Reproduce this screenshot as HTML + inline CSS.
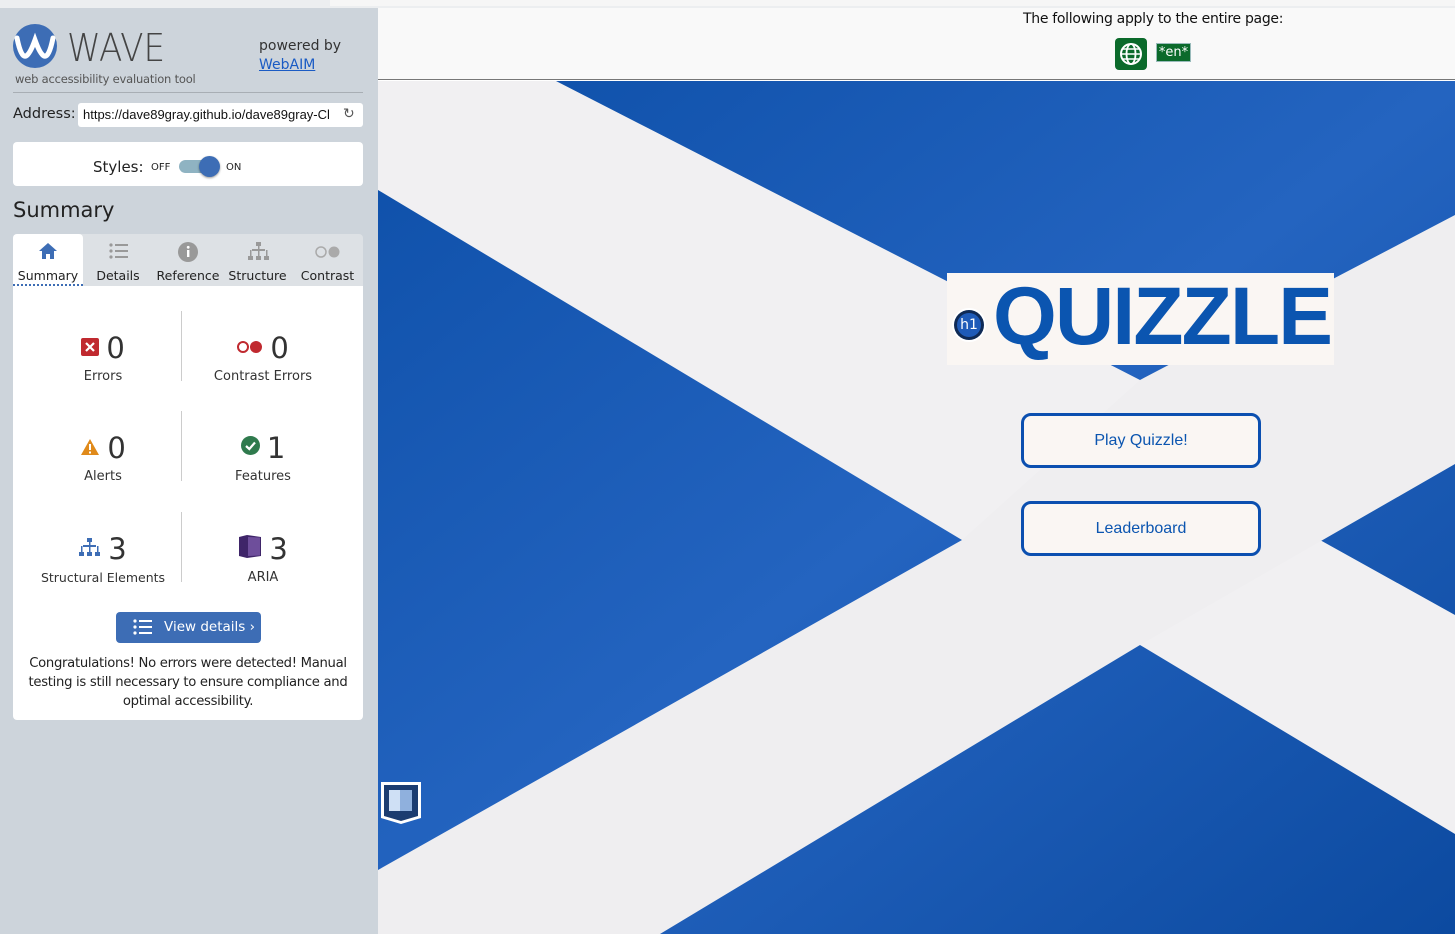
<!DOCTYPE html>
<html><head><meta charset="utf-8"><style>
*{margin:0;padding:0;box-sizing:border-box}
body{width:1455px;height:934px;overflow:hidden;position:relative;font-family:"DejaVu Sans","Liberation Sans",sans-serif;background:#fff}
.abs{position:absolute}
#side{left:0;top:8px;width:378px;height:926px;background:#cdd4db}
.card{background:#fff;border-radius:4px}
.stat{position:absolute;width:160px;text-align:center;font-size:13px;color:#333;line-height:22px}
.num{font-size:29px;font-weight:normal;color:#333;font-family:"DejaVu Sans",sans-serif;line-height:36px;margin-left:3px}
.tab{position:absolute;top:268px;font-size:12.5px;color:#222;text-align:center}
.btn{position:absolute;left:1021px;width:240px;height:55px;border:3px solid #0b4fb0;border-radius:10px;background:#faf6f3;color:#0b55b0;font-family:"Liberation Sans",sans-serif;font-size:16px;text-align:center;line-height:49px}
</style></head><body>
<div class="abs" style="left:0;top:0;width:1455px;height:8px;background:#eceef0"></div>
<div class="abs" style="left:330px;top:0;width:1125px;height:6px;background:#f6f6f6"></div>
<div id="side" class="abs"></div>
<svg class="abs" style="left:13px;top:24px" width="44" height="44" viewBox="0 0 44 44"><circle cx="22" cy="22" r="22" fill="#3d6db5"/><path d="M4 14 Q8 34 13 32 Q17 30 22 16 Q27 30 31 32 Q36 34 40 14" fill="none" stroke="#fff" stroke-width="5" stroke-linecap="round"/></svg>
<div class="abs" style="left:67px;top:26px;font-size:38px;font-weight:200;color:#444;letter-spacing:0;font-family:'DejaVu Sans',sans-serif;transform:scaleX(0.9);transform-origin:left">WAVE</div>
<div class="abs" style="left:15px;top:72px;font-size:11.5px;color:#555;letter-spacing:-0.2px">web accessibility evaluation tool</div>
<div class="abs" style="left:259px;top:38px;font-size:14px;color:#333">powered by</div>
<div class="abs" style="left:259px;top:57px;font-size:14px;color:#1a5bc4;text-decoration:underline">WebAIM</div>
<div class="abs" style="left:13px;top:92px;width:350px;height:1px;background:#a8aeb4"></div>
<div class="abs" style="left:13px;top:106px;font-size:14.5px;color:#222">Address:</div>
<div class="abs card" style="left:78px;top:103px;width:285px;height:24px;border-radius:3px;font-family:'Liberation Sans',sans-serif;font-size:13px;line-height:24px;padding-left:5px;color:#111;overflow:hidden;white-space:nowrap">https://dave89gray.github.io/dave89gray-Cl</div>
<div class="abs" style="left:340px;top:106px;font-size:14px;color:#555;background:#fff;padding:0 3px">↻</div>
<div class="abs card" style="left:13px;top:142px;width:350px;height:44px"></div>
<div class="abs" style="left:93px;top:158px;font-size:15px;color:#222">Styles:</div>
<div class="abs" style="left:151px;top:162px;font-size:10px;color:#222">OFF</div>
<div class="abs" style="left:179px;top:160px;width:36px;height:13px;border-radius:7px;background:#8fb3c2"></div>
<div class="abs" style="left:199px;top:156px;width:21px;height:21px;border-radius:50%;background:#3d6db5;box-shadow:0 1px 2px rgba(0,0,0,.4)"></div>
<div class="abs" style="left:226px;top:162px;font-size:10px;color:#222">ON</div>
<div class="abs" style="left:13px;top:198px;font-size:21px;color:#222">Summary</div>
<div class="abs" style="left:13px;top:234px;width:350px;height:52px;background:#dde1e5;border-radius:4px 4px 0 0"></div>
<div class="abs" style="left:13px;top:234px;width:70px;height:52px;background:#fff;border-radius:4px 4px 0 0;border-bottom:2px dotted #3d6db5"></div>
<svg class="abs" style="left:38px;top:242px" width="20" height="18" viewBox="0 0 20 18"><path d="M10 1 L19 9 H16 V17 H12 V12 H8 V17 H4 V9 H1Z" fill="#3d6db5"/></svg>
<svg class="abs" style="left:109px;top:243px" width="20" height="16" viewBox="0 0 20 16" fill="#999"><circle cx="2" cy="2" r="1.6"/><rect x="6" y="1" width="13" height="2"/><circle cx="2" cy="8" r="1.6"/><rect x="6" y="7" width="13" height="2"/><circle cx="2" cy="14" r="1.6"/><rect x="6" y="13" width="13" height="2"/></svg>
<svg class="abs" style="left:178px;top:242px" width="20" height="20"><circle cx="10" cy="10" r="10" fill="#999"/><rect x="9" y="8" width="2.4" height="7" fill="#fff"/><circle cx="10.2" cy="5.3" r="1.4" fill="#fff"/></svg>
<svg class="abs" style="left:248px;top:242px" width="22" height="20" fill="#999"><rect x="8" y="0" width="5" height="4"/><rect x="4" y="7" width="13" height="2"/><rect x="0" y="14" width="5" height="4"/><rect x="8" y="14" width="5" height="4"/><rect x="16" y="14" width="5" height="4"/><rect x="10" y="4" width="1.5" height="10"/><rect x="2" y="8" width="1.5" height="6"/><rect x="18" y="8" width="1.5" height="6"/></svg>
<svg class="abs" style="left:315px;top:245px" width="28" height="14"><circle cx="6" cy="7" r="5" fill="none" stroke="#aaa" stroke-width="1.5"/><circle cx="19" cy="7" r="5.5" fill="#aaa"/></svg>
<div class="tab" style="left:13px;width:70px">Summary</div>
<div class="tab" style="left:88px;width:60px">Details</div>
<div class="tab" style="left:153px;width:70px">Reference</div>
<div class="tab" style="left:225px;width:65px">Structure</div>
<div class="tab" style="left:295px;width:65px">Contrast</div>
<div class="abs card" style="left:13px;top:286px;width:350px;height:434px;border-radius:0 0 4px 4px"></div>
<div class="abs" style="left:181px;top:311px;width:1px;height:70px;background:#ccc"></div>
<div class="abs" style="left:181px;top:411px;width:1px;height:70px;background:#ccc"></div>
<div class="abs" style="left:181px;top:512px;width:1px;height:70px;background:#ccc"></div>
<div class="stat" style="left:23px;top:330px"><svg width="18" height="18" style="vertical-align:2px"><rect width="18" height="18" rx="2" fill="#c0292f"/><path d="M5 5L13 13M13 5L5 13" stroke="#fff" stroke-width="2.2"/></svg> <span class="num">0</span><br>Errors</div>
<div class="stat" style="left:183px;top:330px"><svg width="26" height="14" style="vertical-align:4px"><circle cx="6" cy="7" r="5" fill="none" stroke="#c0292f" stroke-width="2"/><circle cx="19" cy="7" r="6" fill="#c0292f"/></svg> <span class="num">0</span><br>Contrast Errors</div>
<div class="stat" style="left:23px;top:430px"><svg width="20" height="18" style="vertical-align:2px"><path d="M10 1L19 17H1Z" fill="#e08a1a"/><rect x="9" y="6" width="2" height="6" fill="#fff"/><rect x="9" y="13.5" width="2" height="2" fill="#fff"/></svg> <span class="num">0</span><br>Alerts</div>
<div class="stat" style="left:183px;top:430px"><svg width="19" height="19" style="vertical-align:3px"><circle cx="9.5" cy="9.5" r="9.5" fill="#2f7a4d"/><path d="M5 10L8.3 13L14 6.5" stroke="#fff" stroke-width="2.2" fill="none"/></svg> <span class="num">1</span><br>Features</div>
<div class="stat" style="left:18px;top:531px;width:170px;font-size:12.5px"><svg width="22" height="19" fill="#3d6db5" style="vertical-align:2px"><rect x="8" y="0" width="5" height="4"/><rect x="4" y="7" width="13" height="2"/><rect x="0" y="14" width="5" height="4"/><rect x="8" y="14" width="5" height="4"/><rect x="16" y="14" width="5" height="4"/><rect x="10" y="4" width="1.5" height="10"/><rect x="2" y="8" width="1.5" height="6"/><rect x="18" y="8" width="1.5" height="6"/></svg> <span class="num">3</span><br>Structural Elements</div>
<div class="stat" style="left:183px;top:531px"><svg width="24" height="24" style="vertical-align:0"><path d="M1 2L9 0L23 2V21L9 23L1 21Z" fill="#3f2569"/><path d="M10 2L22 2.5V20.5L10 21Z" fill="#6e4e9b"/></svg> <span class="num">3</span><br>ARIA</div>
<div class="abs" style="left:116px;top:612px;width:145px;height:31px;background:#3d6db5;border-radius:4px;color:#fff;font-size:13.5px;line-height:31px;padding-left:48px">View details ›</div>
<svg class="abs" style="left:133px;top:619px" width="19" height="16" fill="#fff"><circle cx="2" cy="2" r="1.6"/><rect x="6" y="1" width="13" height="2"/><circle cx="2" cy="8" r="1.6"/><rect x="6" y="7" width="13" height="2"/><circle cx="2" cy="14" r="1.6"/><rect x="6" y="13" width="13" height="2"/></svg>
<div class="abs" style="left:15px;top:654px;width:346px;text-align:center;font-size:13.2px;line-height:19px;color:#222;letter-spacing:-0.3px">Congratulations! No errors were detected! Manual testing is still necessary to ensure compliance and optimal accessibility.</div>

<div class="abs" style="left:378px;top:8px;width:1077px;height:72px;background:#f9f9f9;border-bottom:1px solid #777"></div>
<div class="abs" style="left:1023px;top:11px;font-size:14px;color:#111;letter-spacing:-0.3px">The following apply to the entire page:</div>
<svg class="abs" style="left:1115px;top:38px" width="32" height="32"><rect width="32" height="32" rx="4" fill="#0b6a2b"/><circle cx="16" cy="16" r="10" fill="none" stroke="#fff" stroke-width="2"/><ellipse cx="16" cy="16" rx="4.5" ry="10" fill="none" stroke="#fff" stroke-width="1.8"/><path d="M6 16H26M8 11H24M8 21H24" stroke="#fff" stroke-width="1.6"/></svg>
<div class="abs" style="left:1156px;top:43px;width:35px;height:19px;background:#0b6a2b;border:1px solid #9bb;color:#fff;font-size:13px;line-height:17px;text-align:center">*en*</div>
<svg class="abs" style="left:378px;top:81px" width="1077" height="853" viewBox="378 81 1077 853">
<defs><linearGradient id="g" x1="0" y1="0" x2="1" y2="1"><stop offset="0" stop-color="#0d4fa8"/><stop offset=".5" stop-color="#2464c0"/><stop offset="1" stop-color="#0c4aa0"/></linearGradient></defs>
<rect x="378" y="81" width="1077" height="853" fill="url(#g)"/>
<polygon points="556,81 1140,380 1320,540 1455,615 1455,834 1140,645 962,540 378,190 378,81" fill="#f1f0f2"/>
<polygon points="1455,215 1140,380 962,540 378,870 378,934 660,934 1140,645 1455,464" fill="#efeef0"/>
</svg>
<div class="abs" style="left:947px;top:273px;width:387px;height:92px;background:#faf6f3"></div>
<div class="abs" style="left:993px;top:270px;font-family:'Liberation Sans',sans-serif;font-weight:bold;font-size:82px;color:#0b55b0;letter-spacing:-1.8px">QUIZZLE</div>
<div class="abs" style="left:952px;top:308px;width:34px;height:34px;border-radius:50%;background:#fff"></div>
<div class="abs" style="left:954px;top:310px;width:30px;height:30px;border-radius:50%;background:#0f2a55;padding:3px"><div style="width:24px;height:24px;border-radius:50%;background:#1f5bb8;color:#fff;font-size:14px;line-height:24px;text-align:center">h1</div></div>
<div class="btn" style="top:413px">Play Quizzle!</div>
<div class="btn" style="top:501px">Leaderboard</div>
<svg class="abs" style="left:380px;top:781px" width="42" height="44"><path d="M1 1H41V37L21 43L1 37Z" fill="#fff"/><path d="M4 4H38V35L21 40L4 35Z" fill="#1b3c70"/><rect x="9" y="9" width="23" height="21" fill="#cfe0f5"/><rect x="20" y="9" width="12" height="21" fill="#8fb0dd"/></svg>
</body></html>
